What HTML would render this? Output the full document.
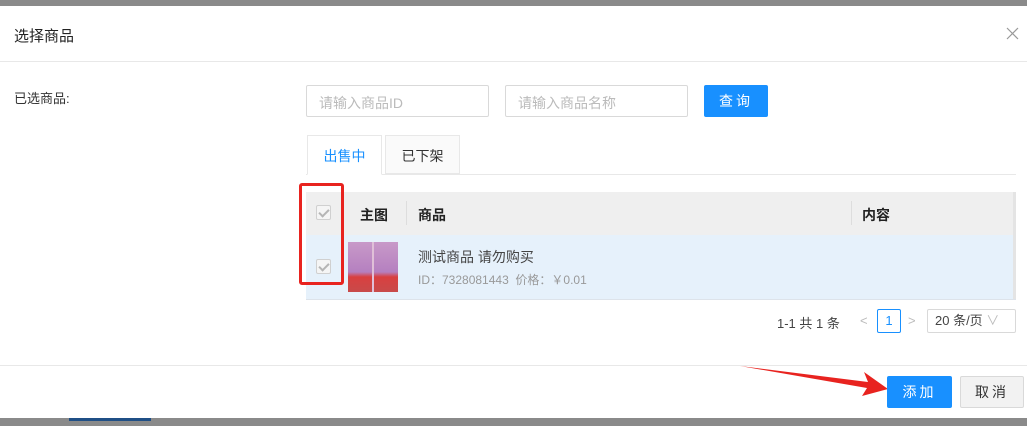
<!DOCTYPE html>
<html><head><meta charset="utf-8"><style>
*{box-sizing:border-box;margin:0;padding:0}
body{width:1027px;height:426px;position:relative;overflow:hidden;background:#fff;font-family:"Liberation Sans","Noto Sans CJK SC",sans-serif;font-size:13px;color:#333}
.a{position:absolute}
.inp{position:absolute;height:32px;border:1px solid #d9d9d9;border-radius:2px;color:#bbb;font-size:14px;padding:7px 12px}
.cb{position:absolute;width:15px;height:15px;border:1px solid #d0d0d0;border-radius:2px;background:#f5f5f5}
.cb:after{content:"";position:absolute;left:4px;top:1px;width:4px;height:8px;border:solid #b5b5b5;border-width:0 2px 2px 0;transform:rotate(45deg)}
</style></head><body>
<div class="a" style="left:0;top:0;width:1027px;height:6px;background:#8a8a8a"></div>
<div class="a" style="left:0;top:418px;width:1027px;height:8px;background:#8a8a8a"></div>
<div class="a" style="left:69px;top:418px;width:82px;height:3px;background:#1f4f86"></div>
<div class="a" style="left:14px;top:25px;font-size:15px;color:#222">选择商品</div>
<svg class="a" style="left:1006px;top:27px" width="13" height="13"><path d="M1 1L12 12M12 1L1 12" stroke="#999" stroke-width="1.2"/></svg>
<div class="a" style="left:0;top:61px;width:1027px;height:1px;background:#e8e8e8"></div>
<div class="a" style="left:14px;top:88px;font-size:13px;color:#333">已选商品:</div>
<div class="inp" style="left:306px;top:85px;width:183px">请输入商品ID</div>
<div class="inp" style="left:505px;top:85px;width:183px">请输入商品名称</div>
<div class="a" style="left:704px;top:85px;width:64px;height:32px;background:#1890ff;border-radius:2px;color:#fff;font-size:14px;text-align:center;line-height:32px;letter-spacing:3px">查询</div>
<div class="a" style="left:306px;top:174px;width:710px;height:1px;background:#e8e8e8"></div>
<div class="a" style="left:307px;top:135px;width:75px;height:40px;border:1px solid #e8e8e8;border-bottom:1px solid #fff;background:#fff;color:#1890ff;font-size:14px;text-align:center;line-height:40px">出售中</div>
<div class="a" style="left:385px;top:135px;width:75px;height:39px;border:1px solid #e8e8e8;background:#fafafa;color:#333;font-size:14px;text-align:center;line-height:40px">已下架</div>
<div class="a" style="left:306px;top:192px;width:707px;height:43px;background:#efefef"></div>
<div class="a" style="left:406px;top:201px;width:1px;height:24px;background:#ddd"></div>
<div class="a" style="left:851px;top:201px;width:1px;height:24px;background:#ddd"></div>
<div class="cb" style="left:316px;top:205px"></div>
<div class="a" style="left:360px;top:205px;font-size:14px;font-weight:bold;color:#222">主图</div>
<div class="a" style="left:418px;top:205px;font-size:14px;font-weight:bold;color:#222">商品</div>
<div class="a" style="left:862px;top:205px;font-size:14px;font-weight:bold;color:#222">内容</div>
<div class="a" style="left:306px;top:235px;width:707px;height:64px;background:#e6f1fb"></div>
<div class="a" style="left:1013px;top:192px;width:3px;height:108px;background:#e4e4e4"></div>
<div class="a" style="left:306px;top:299px;width:710px;height:1px;background:#dde3ea"></div>
<div class="cb" style="left:316px;top:259px"></div>
<div class="a" style="left:348px;top:242px;width:50px;height:50px;background:linear-gradient(180deg,#c899c8 0%,#b580c0 60%,#d94040 70%,#c84a4a 100%)"></div>
<div class="a" style="left:372px;top:242px;width:2px;height:50px;background:#e0c0d8"></div>
<div class="a" style="left:418px;top:247px;font-size:14px;color:#444">测试商品 请勿购买</div>
<div class="a" style="left:418px;top:271px;font-size:12px;color:#999">ID：7328081443&nbsp;&nbsp;价格：￥0.01</div>
<div class="a" style="left:299px;top:183px;width:45px;height:102px;border:3px solid #e8231f;border-radius:3px"></div>
<div class="a" style="left:777px;top:313px;font-size:13px;color:#444">1-1 共 1 条</div>
<div class="a" style="left:860px;top:313px;font-size:13px;color:#bbb">&lt;</div>
<div class="a" style="left:877px;top:309px;width:24px;height:24px;border:1px solid #1890ff;border-radius:2px;color:#1890ff;text-align:center;line-height:22px">1</div>
<div class="a" style="left:908px;top:313px;font-size:13px;color:#bbb">&gt;</div>
<div class="a" style="left:927px;top:309px;width:89px;height:24px;border:1px solid #d9d9d9;border-radius:2px;color:#444;line-height:22px;padding-left:7px">20 条/页 <span style="color:#bbb">∨</span></div>
<div class="a" style="left:0;top:365px;width:1027px;height:1px;background:#e8e8e8"></div>
<svg class="a" style="left:740px;top:365px" width="150" height="32"><polygon points="0,1 128,17 124,7 148,24 122,31 127,23" fill="#e8231f"/></svg>
<div class="a" style="left:887px;top:376px;width:65px;height:32px;background:#1890ff;border-radius:2px;color:#fff;font-size:14px;text-align:center;line-height:32px;letter-spacing:3px">添加</div>
<div class="a" style="left:960px;top:376px;width:64px;height:32px;background:#f2f2f2;border:1px solid #d9d9d9;border-radius:2px;color:#333;font-size:14px;text-align:center;line-height:30px;letter-spacing:3px">取消</div>
</body></html>
